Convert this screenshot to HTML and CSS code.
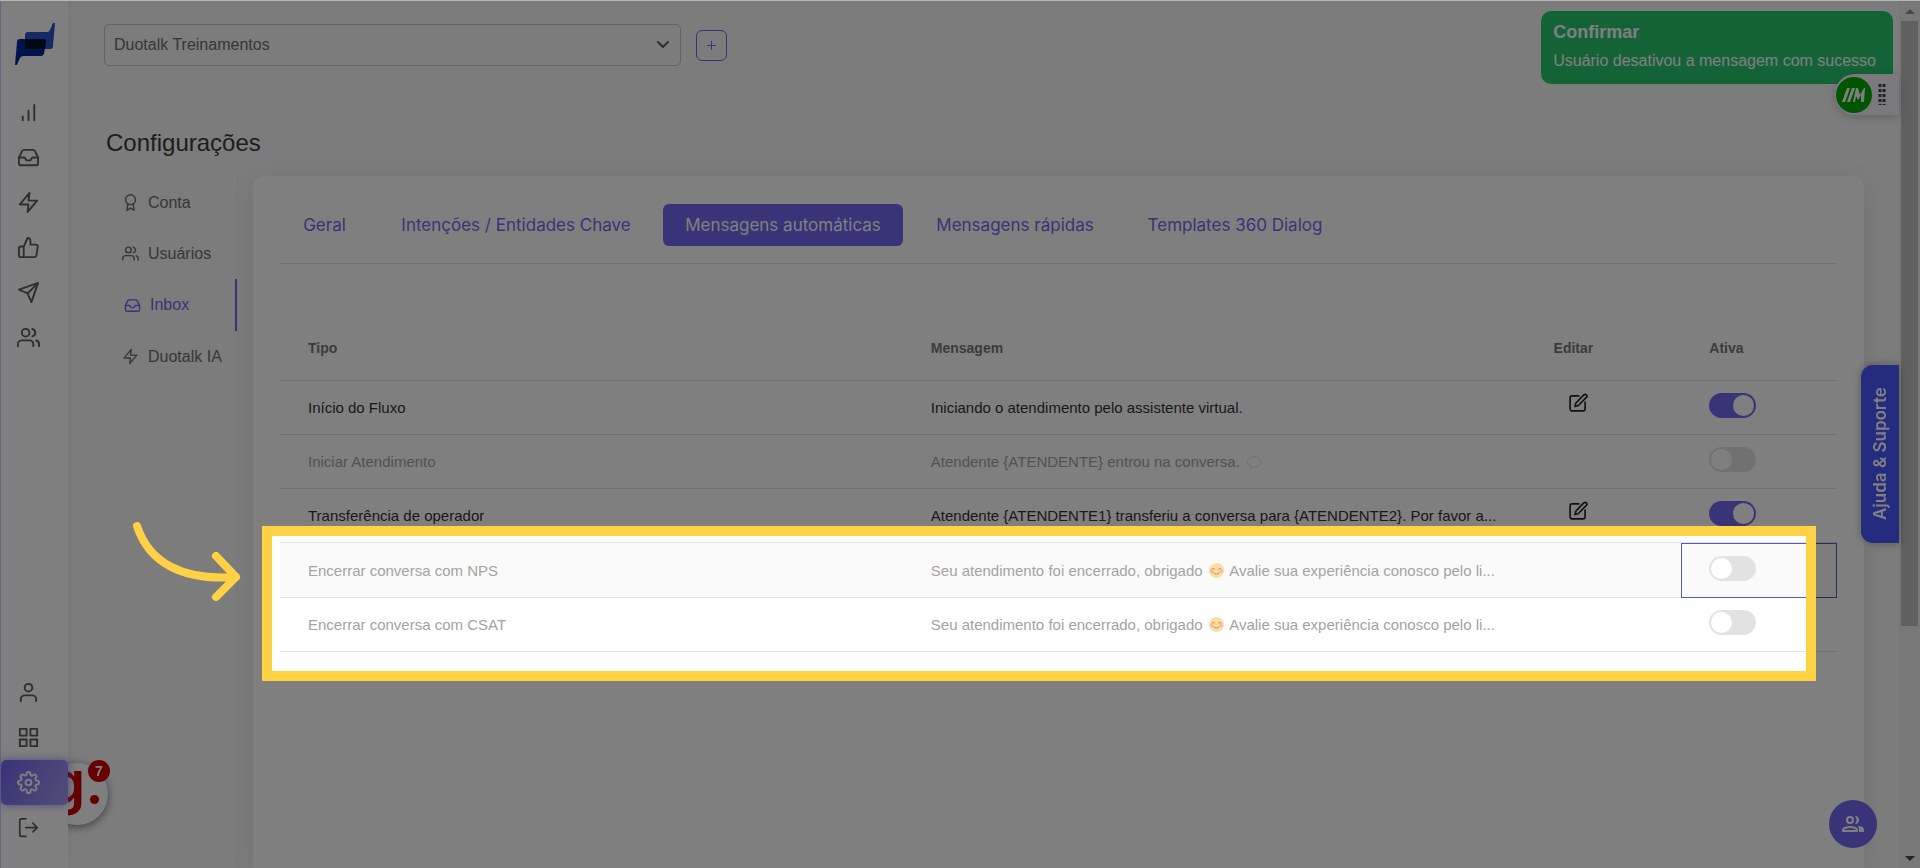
FILE: index.html
```html
<!DOCTYPE html>
<html lang="pt-BR">
<head>
    <meta charset="UTF-8">
    <meta name="viewport" content="width=device-width, initial-scale=1.0">
    <title>Duotalk - Configurações</title>
    <link rel="stylesheet" href="styles.css">
</head>
<body>
    <!-- shared icons -->
    <svg class="sprite" aria-hidden="true">
        <symbol id="bars" viewBox="0 0 24 24"><path d="M18 20V4M12 20v-10M6 20v-4"/></symbol>
        <symbol id="inbox" viewBox="0 0 24 24"><path d="M22 12h-6l-2 3h-4l-2-3H2"/><path d="M5.45 5.11 2 12v6a2 2 0 0 0 2 2h16a2 2 0 0 0 2-2v-6l-3.45-6.89A2 2 0 0 0 16.76 4H7.24a2 2 0 0 0-1.79 1.11z"/></symbol>
        <symbol id="zap" viewBox="0 0 24 24"><path d="M13 2 3 14h9l-1 8 10-12h-9l1-8z"/></symbol>
        <symbol id="thumb" viewBox="0 0 24 24"><path d="M14 9V5a3 3 0 0 0-3-3l-4 9v11h11.28a2 2 0 0 0 2-1.7l1.38-9a2 2 0 0 0-2-2.3zM7 22H4a2 2 0 0 1-2-2v-7a2 2 0 0 1 2-2h3"/></symbol>
        <symbol id="send" viewBox="0 0 24 24"><path d="M22 2 11 13M22 2l-7 20-4-9-9-4 20-7z"/></symbol>
        <symbol id="users" viewBox="0 0 24 24"><path d="M17 21v-2a4 4 0 0 0-4-4H5a4 4 0 0 0-4 4v2"/><circle cx="9" cy="7" r="4"/><path d="M23 21v-2a4 4 0 0 0-3-3.87M16 3.13a4 4 0 0 1 0 7.75"/></symbol>
        <symbol id="user" viewBox="0 0 24 24"><path d="M20 21v-2a4 4 0 0 0-4-4H8a4 4 0 0 0-4 4v2"/><circle cx="12" cy="7" r="4"/></symbol>
        <symbol id="grid" viewBox="0 0 24 24"><path d="M3 3h7v7H3zM14 3h7v7h-7zM14 14h7v7h-7zM3 14h7v7H3z"/></symbol>
        <symbol id="gear" viewBox="0 0 24 24"><circle cx="12" cy="12" r="3"/><path d="M19.4 15a1.65 1.65 0 0 0 .33 1.82l.06.06a2 2 0 1 1-2.83 2.83l-.06-.06a1.65 1.65 0 0 0-2.8 1.17V21a2 2 0 0 1-4 0v-.09A1.65 1.65 0 0 0 7.2 19.65l-.06.06a2 2 0 1 1-2.83-2.83l.06-.06A1.65 1.65 0 0 0 3.09 14H3a2 2 0 0 1 0-4h.09A1.65 1.65 0 0 0 4.37 7.18l-.06-.06a2 2 0 1 1 2.83-2.83l.06.06A1.65 1.65 0 0 0 10 3.09V3a2 2 0 0 1 4 0v.09a1.65 1.65 0 0 0 2.82 1.26l.06-.06a2 2 0 1 1 2.83 2.83l-.06.06A1.65 1.65 0 0 0 20.91 10H21a2 2 0 0 1 0 4h-.09a1.65 1.65 0 0 0-1.51 1z"/></symbol>
        <symbol id="logout" viewBox="0 0 24 24"><path d="M9 22H4a2 2 0 0 1-2-2V4a2 2 0 0 1 2-2h5M17 17l5-5-5-5M22 12H9"/></symbol>
        <symbol id="award" viewBox="0 0 24 24"><circle cx="12" cy="8" r="7"/><path d="M8.21 13.89 7 23l5-3 5 3-1.21-9.12"/></symbol>
        <symbol id="edit" viewBox="0 0 24 24"><path d="M13 3.5H5A2.5 2.5 0 0 0 2.5 6v13A2.5 2.5 0 0 0 5 21.5h13a2.5 2.5 0 0 0 2.5-2.5v-8"/><path d="M19 2.3a2.1 2.1 0 0 1 3 3L12.5 15l-4.2 1.2L9.5 12z"/></symbol>
    </svg>

    <aside class="sidebar">
        <a href="#" class="logo" aria-label="Duotalk">
            <svg viewBox="0 0 40 42" width="40" height="42">
                <path d="M13 9h20c3-2 3-5 5-9h2l-2 23q0 3-3 3H10V12q0-3 3-3z" fill="#2a55c8"/>
                <path d="M5 16h24q2 0 2 3l-2 12q-1 2-3 2H8c-4 1-4 5-6 9H0l2-23q0-3 3-3z" fill="#00279a"/>
                <path d="M10 16h19q2 0 2 3l-1 7H10z" fill="#00102c"/>
            </svg>
        </a>
        <nav class="side-nav">
            <a href="#" aria-label="Relatórios"><svg><use href="#bars"/></svg></a>
            <a href="#" aria-label="Inbox"><svg><use href="#inbox"/></svg></a>
            <a href="#" aria-label="Fluxos"><svg><use href="#zap"/></svg></a>
            <a href="#" aria-label="Avaliações"><svg><use href="#thumb"/></svg></a>
            <a href="#" aria-label="Campanhas"><svg><use href="#send"/></svg></a>
            <a href="#" aria-label="Contatos"><svg><use href="#users"/></svg></a>
        </nav>
        <nav class="side-nav side-nav-bottom">
            <a href="#" aria-label="Perfil"><svg><use href="#user"/></svg></a>
            <a href="#" aria-label="Aplicativos"><svg><use href="#grid"/></svg></a>
            <a href="#" aria-label="Configurações" class="active"><svg><use href="#gear"/></svg></a>
            <a href="#" aria-label="Sair"><svg class="small"><use href="#logout"/></svg></a>
        </nav>
    </aside>

    <main class="main">
        <header class="topbar">
            <div class="select-wrap">
                <select aria-label="Empresa">
                    <option>Duotalk Treinamentos</option>
                </select>
                <svg viewBox="0 0 12 8" width="12" height="8"><path d="M1 1l5 5 5-5"/></svg>
            </div>
            <button type="button" class="add" aria-label="Adicionar"><svg viewBox="0 0 9 9" width="9" height="9"><path d="M4.5 0v9M0 4.5h9"/></svg></button>
        </header>

        <h1>Configurações</h1>

        <div class="content">
            <nav class="settings-nav">
                <a href="#"><svg><use href="#award"/></svg>Conta</a>
                <a href="#"><svg><use href="#users"/></svg>Usuários</a>
                <a href="#" class="active"><svg><use href="#inbox"/></svg>Inbox</a>
                <a href="#"><svg><use href="#zap"/></svg>Duotalk IA</a>
            </nav>

            <section class="card">
                <nav class="tabs">
                    <a href="#">Geral</a>
                    <a href="#">Intenções / Entidades Chave</a>
                    <a href="#" class="active">Mensagens automáticas</a>
                    <a href="#">Mensagens rápidas</a>
                    <a href="#">Templates 360 Dialog</a>
                </nav>

                <div class="table-wrap">
                    <table>
                        <thead>
                            <tr>
                                <th class="wide">Tipo</th>
                                <th class="wide">Mensagem</th>
                                <th>Editar</th>
                                <th>Ativa</th>
                            </tr>
                        </thead>
                        <tbody>
                            <tr>
                                <td>Início do Fluxo</td>
                                <td>Iniciando o atendimento pelo assistente virtual.</td>
                                <td><button type="button" class="edit" aria-label="Editar"><svg><use href="#edit"/></svg></button></td>
                                <td><input type="checkbox" class="switch" aria-label="Ativar Início do Fluxo" checked></td>
                            </tr>
                            <tr class="off">
                                <td>Iniciar Atendimento</td>
                                <td>Atendente {ATENDENTE} entrou na conversa. <svg class="balloon" viewBox="0 0 16 14"><path d="M8 1c4 0 7 2 7 5s-3 5-7 5l-4 2 1-3C2 9 1 8 1 6c0-3 3-5 7-5z"/></svg></td>
                                <td></td>
                                <td><input type="checkbox" class="switch" aria-label="Ativar Iniciar Atendimento"></td>
                            </tr>
                            <tr>
                                <td>Transferência de operador</td>
                                <td>Atendente {ATENDENTE1} transferiu a conversa para {ATENDENTE2}. Por favor a...</td>
                                <td><button type="button" class="edit" aria-label="Editar"><svg><use href="#edit"/></svg></button></td>
                                <td><input type="checkbox" class="switch" aria-label="Ativar Transferência de operador" checked></td>
                            </tr>
                            <tr class="off hover">
                                <td>Encerrar conversa com NPS</td>
                                <td>Seu atendimento foi encerrado, obrigado <svg class="smile" viewBox="0 0 16 16"><circle class="face" cx="8" cy="8" r="8"/><circle class="cheek" cx="3" cy="9" r="2"/><circle class="cheek" cx="13" cy="9" r="2"/><path d="M3 6.5q1.5-2 3 0M10 6.5q1.5-2 3 0M5 10.5q3 3 6 0"/></svg> Avalie sua experiência conosco pelo li...</td>
                                <td></td>
                                <td class="selected"><input type="checkbox" class="switch" aria-label="Ativar Encerrar conversa com NPS"></td>
                            </tr>
                            <tr class="off">
                                <td>Encerrar conversa com CSAT</td>
                                <td>Seu atendimento foi encerrado, obrigado <svg class="smile" viewBox="0 0 16 16"><circle class="face" cx="8" cy="8" r="8"/><circle class="cheek" cx="3" cy="9" r="2"/><circle class="cheek" cx="13" cy="9" r="2"/><path d="M3 6.5q1.5-2 3 0M10 6.5q1.5-2 3 0M5 10.5q3 3 6 0"/></svg> Avalie sua experiência conosco pelo li...</td>
                                <td></td>
                                <td><input type="checkbox" class="switch" aria-label="Ativar Encerrar conversa com CSAT"></td>
                            </tr>
                        </tbody>
                    </table>

                    <!-- tour step: dims everything outside the box -->
                    <div class="spotlight"></div>
                    <svg class="arrow" viewBox="0 0 108 82" width="108" height="82"><path d="M4 5C16 42 50 60 103 56M83 35l20 21-20 20"/></svg>
                </div>
            </section>
        </div>
    </main>

    <div class="scrollbar">
        <svg viewBox="0 0 10 5" width="10" height="5"><path d="M0 5l5-5 5 5z" fill="#8c8c8c"/></svg>
        <div class="thumb"></div>
        <svg viewBox="0 0 10 5" width="10" height="5"><path d="M0 0l5 5 5-5z" fill="#484848"/></svg>
    </div>

    <div class="toast" role="status">
        <strong>Confirmar</strong>
        <p>Usuário desativou a mensagem com sucesso</p>
    </div>

    <div class="extension">
        <svg viewBox="0 0 36 36" width="36" height="36">
            <circle cx="18" cy="18" r="18" fill="#00aa00"/>
            <path d="M6 25 11 11h3L9 25zM11 25l5-14h3l-5 14zM17 25l3-14h2l2 7 4-7h1l-1 14h-3v-7l-3 5-2-4-1 6z" fill="#fff"/>
        </svg>
        <svg viewBox="0 0 8 23" width="8" height="23"><path d="M2 1v21M6 1v21" stroke="#444" stroke-width="3" stroke-dasharray="3 2"/></svg>
    </div>

    <button type="button" class="support">Ajuda &amp; Suporte</button>

    <button type="button" class="fab" aria-label="Equipe">
        <svg viewBox="0 0 24 18" width="24" height="18">
            <circle cx="9" cy="5" r="3"/>
            <path d="M2 16v-1c0-2 4-3 7-3s7 1 7 3v1z"/>
            <path class="solid" d="M14 1a4 4 0 0 1 0 8q3-4 0-8zM17 11c4 0 6 2 6 4v2h-5c0-3 0-4-1-6z"/>
        </svg>
    </button>

    <div class="guide">
        <span class="guide-logo">g.</span>
        <span class="guide-count">7</span>
    </div>
</body>
</html>
```
FILE: styles.css
```css
* {
    box-sizing: border-box;
}

body {
    font-family: "Liberation Sans", Arial, sans-serif;
    font-size: 16px;
    color: #6e6e6e;
    background: #f8f8f8;
    margin: 0;
    height: 100vh;
    display: flex;
    border-top: 1px solid #b4b4b4;
}

a {
    color: inherit;
    text-decoration: none;
}

button {
    font: inherit;
    cursor: pointer;
}

svg {
    fill: none;
    stroke-linecap: round;
    stroke-linejoin: round;
}

.sprite {
    position: absolute;
    width: 0;
    height: 0;
}

/* sidebar */
.sidebar {
    position: relative;
    z-index: 3;
    flex: 0 0 68px;
    display: flex;
    flex-direction: column;
    background: #fff;
    border-left: 1px solid #cdd0ff;
    box-shadow: 0 0 15px rgba(0, 0, 0, 0.05);
    padding-bottom: 18px;
}

.logo {
    padding: 22px 0 0 14px;
    height: 89px;
}

.logo svg {
    stroke: none;
}

.side-nav a {
    display: flex;
    align-items: center;
    height: 45px;
    padding-left: 16px;
    color: #5e5e5e;
}

.side-nav svg {
    width: 23px;
    height: 23px;
    stroke: currentColor;
    stroke-width: 2;
}

.side-nav .small {
    width: 21px;
    height: 21px;
    margin-left: 1px;
}

.side-nav-bottom {
    margin-top: auto;
}

.side-nav .active {
    color: #fff;
    background: linear-gradient(118deg, #7367f0, #a29bf0);
    border-radius: 5px;
    box-shadow: 0 0 10px rgba(115, 103, 240, 0.7);
}

/* main area */
.main {
    flex: 1;
    min-width: 0;
    display: flex;
    flex-direction: column;
    padding: 23px 35px 0 36px;
}

.topbar {
    display: flex;
    align-items: center;
    gap: 15px;
}

.select-wrap {
    position: relative;
    flex: 0 1 577px;
}

.select-wrap select {
    width: 100%;
    height: 42px;
    padding: 0 9px 2px;
    appearance: none;
    font: inherit;
    color: inherit;
    background: transparent;
    border: 1px solid #c6c6c6;
    border-radius: 5px;
}

.select-wrap svg {
    position: absolute;
    right: 12px;
    top: 17px;
    stroke: #5e5e5e;
    stroke-width: 2;
    pointer-events: none;
}

.add {
    display: flex;
    align-items: center;
    justify-content: center;
    width: 31px;
    height: 31px;
    padding: 0;
    background: transparent;
    border: 1px solid #7367f0;
    border-radius: 6px;
}

.add svg {
    stroke: #7367f0;
    stroke-width: 1;
}

h1 {
    margin: 63px 0 19px 2px;
    font-size: 24px;
    line-height: 28px;
    font-weight: normal;
    color: #3c3c3c;
}

.content {
    flex: 1;
    display: flex;
    gap: 15px;
}

.settings-nav {
    flex: 0 0 134px;
    padding-top: 1px;
    border-right: 1px solid #efefef;
}

.settings-nav a {
    display: flex;
    align-items: center;
    gap: 9px;
    height: 51px;
    padding-left: 18px;
}

.settings-nav svg {
    width: 17px;
    height: 17px;
    stroke: currentColor;
    stroke-width: 2;
}

.settings-nav .active {
    height: 52px;
    padding-left: 20px;
    color: #7367f0;
    border-right: 2px solid #7367f0;
}

.card {
    flex: 1;
    min-width: 0;
    padding: 28px 27px;
    background: #fff;
    border-radius: 10px 10px 0 0;
    box-shadow: 0 4px 24px rgba(34, 41, 47, 0.1);
}

.tabs {
    display: grid;
    grid-template-columns: 89px 270px 240px 200px 216px;
    gap: 12px;
    padding-bottom: 17px;
    border-bottom: 1px solid #e2e2e2;
    font-family: Inter, sans-serif;
    font-size: 17px;
    color: #7367f0;
}

.tabs a {
    line-height: 42px;
    border-radius: 6px;
    text-align: center;
    white-space: nowrap;
}

.tabs .active {
    color: #fff;
    background: #7367f0;
}

/* table */
.table-wrap {
    position: relative;
    margin-top: 52px;
}

table {
    width: 100%;
    table-layout: fixed;
    border-collapse: separate;
    border-spacing: 0;
    font-size: 15px;
    color: #333;
}

th,
td {
    height: 54px;
    padding: 0 28px;
    border-bottom: 1px solid #e2e2e2;
    text-align: left;
    white-space: nowrap;
}

th {
    width: 10%;
    height: 65px;
    font-size: 14px;
    color: #767676;
}

th.wide {
    width: 40%;
}

.off td {
    color: #a3a3a3;
}

.hover td {
    height: 55px;
    background: #fafafa;
}

.selected {
    outline: 1px solid #4d5fc4;
    outline-offset: -1px;
}

.edit {
    display: block;
    margin: 0 0 10px 14px;
    padding: 0;
    border: 0;
    background: none;
}

.edit svg {
    display: block;
    width: 20px;
    height: 20px;
    stroke: #222;
    stroke-width: 2;
}

.switch {
    display: block;
    appearance: none;
    width: 47px;
    height: 25px;
    margin: 0 0 4px;
    padding: 2px;
    border-radius: 13px;
    background: #e2e2e2;
    cursor: pointer;
}

.switch::before {
    content: "";
    display: block;
    width: 21px;
    height: 21px;
    border-radius: 50%;
    background: #fff;
}

.switch:checked {
    background: #7367f0;
}

.switch:checked::before {
    margin-left: auto;
}

.smile {
    width: 15px;
    height: 15px;
    margin: 0 2px;
    vertical-align: -2px;
    stroke: #b08a70;
}

.smile .face {
    fill: #ffdda0;
    stroke: none;
}

.smile .cheek {
    fill: #ffb8a0;
    stroke: none;
}

.balloon {
    width: 16px;
    height: 14px;
    margin-left: 2px;
    vertical-align: -3px;
    stroke: #e0e0e0;
}

/* tour overlay */
.spotlight {
    position: absolute;
    z-index: 20;
    top: 210px;
    left: -18px;
    right: 21px;
    bottom: -29px;
    border: 10px solid #ffd145;
    box-shadow: 0 0 0 9999px rgba(0, 0, 0, 0.5);
    pointer-events: none;
}

.arrow {
    position: absolute;
    z-index: 21;
    top: 205px;
    left: -147px;
    stroke: #ffd145;
    stroke-width: 8;
}

/* scrollbar */
.scrollbar {
    flex: 0 0 21px;
    display: flex;
    flex-direction: column;
    align-items: center;
    padding: 8px 0 7px;
    background: #f1f1f1;
}

.scrollbar .thumb {
    width: 17px;
    height: 71%;
    margin: 7px 0 auto;
    background: #c1c1c1;
}

/* floating widgets */
.toast {
    position: fixed;
    z-index: 5;
    top: 11px;
    right: 27px;
    padding: 9px 17px 13px 12px;
    height: 73px;
    color: #fff;
    background: #28c76f;
    border-radius: 10px;
}

.toast strong {
    display: block;
    font-size: 18px;
    line-height: 24px;
}

.toast p {
    margin: 5px 0 0;
    line-height: 24px;
}

.extension {
    position: fixed;
    z-index: 6;
    top: 74px;
    right: 21px;
    display: flex;
    align-items: center;
    gap: 6px;
    height: 41px;
    padding: 0 13px 0 1px;
    background: #f4f5fa;
    border-radius: 20px 0 0 20px;
    box-shadow: 0 2px 10px rgba(0, 0, 0, 0.2);
}

.extension svg {
    stroke-linecap: butt;
}

.support {
    position: fixed;
    z-index: 5;
    top: 365px;
    right: 21px;
    width: 38px;
    height: 178px;
    padding: 0;
    border: 0;
    border-radius: 0 12px 12px 0;
    font-family: Inter, sans-serif;
    font-size: 17px;
    font-weight: 600;
    color: #fff;
    background: #4858ff;
    box-shadow: 0 0 10px rgba(0, 0, 0, 0.3);
    writing-mode: vertical-rl;
    transform: rotate(180deg);
}

.fab {
    position: fixed;
    z-index: 5;
    right: 43px;
    bottom: 20px;
    display: flex;
    align-items: center;
    justify-content: center;
    width: 48px;
    height: 48px;
    padding: 0;
    border: 0;
    border-radius: 50%;
    background: #7367f0;
}

.fab svg {
    stroke: #fff;
    stroke-width: 2;
}

.fab .solid {
    fill: #fff;
    stroke: none;
}

.guide {
    position: fixed;
    z-index: 2;
    left: 46px;
    bottom: 43px;
    width: 62px;
    height: 62px;
    border-radius: 50%;
    background: #fff;
    box-shadow: 0 2px 8px rgba(0, 0, 0, 0.5);
}

.guide-logo {
    display: block;
    padding-left: 3px;
    font-family: Inter, sans-serif;
    font-size: 58px;
    font-weight: 600;
    line-height: 38px;
    color: #c00;
}

.guide-count {
    position: absolute;
    top: -3px;
    right: -2px;
    width: 22px;
    border-radius: 50%;
    font-size: 14px;
    font-weight: bold;
    line-height: 22px;
    text-align: center;
    color: #fff;
    background: #c00;
}
```
